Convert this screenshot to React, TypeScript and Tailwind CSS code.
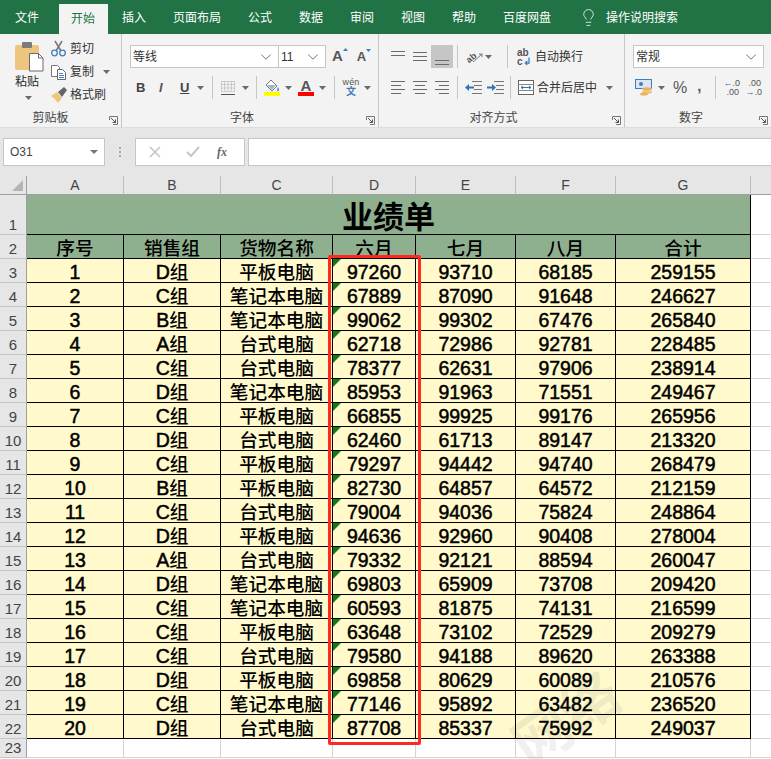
import React from "react";
import { ChevronDown, Lightbulb } from "lucide-react";

const FONT = { fontFamily: '"Liberation Sans", "Noto Sans CJK SC", sans-serif' };

const tabs = [
  { label: "文件", cls: "w-[59px] pl-[15px]" },
  { label: "开始", cls: "w-[49px] pl-[12px] bg-[#f3f3f3] text-[#217346] h-[30px] mt-[4px] pt-[6px]" },
  { label: "插入", cls: "w-[51px] pl-[14px]" },
  { label: "页面布局", cls: "w-[75px] pl-[14px]" },
  { label: "公式", cls: "w-[51px] pl-[14px]" },
  { label: "数据", cls: "w-[51px] pl-[14px]" },
  { label: "审阅", cls: "w-[51px] pl-[14px]" },
  { label: "视图", cls: "w-[51px] pl-[14px]" },
  { label: "帮助", cls: "w-[51px] pl-[14px]" },
  { label: "百度网盘", cls: "w-[77px] pl-[14px]" },
];

const rows: [string, string, number, number, number, number][] = [
  ["D组", "平板电脑", 97260, 93710, 68185, 259155],
  ["C组", "笔记本电脑", 67889, 87090, 91648, 246627],
  ["B组", "笔记本电脑", 99062, 99302, 67476, 265840],
  ["A组", "台式电脑", 62718, 72986, 92781, 228485],
  ["C组", "台式电脑", 78377, 62631, 97906, 238914],
  ["D组", "笔记本电脑", 85953, 91963, 71551, 249467],
  ["C组", "平板电脑", 66855, 99925, 99176, 265956],
  ["D组", "台式电脑", 62460, 61713, 89147, 213320],
  ["C组", "平板电脑", 79297, 94442, 94740, 268479],
  ["B组", "平板电脑", 82730, 64857, 64572, 212159],
  ["C组", "台式电脑", 79004, 94036, 75824, 248864],
  ["D组", "平板电脑", 94636, 92960, 90408, 278004],
  ["A组", "台式电脑", 79332, 92121, 88594, 260047],
  ["D组", "笔记本电脑", 69803, 65909, 73708, 209420],
  ["C组", "笔记本电脑", 60593, 81875, 74131, 216599],
  ["C组", "平板电脑", 63648, 73102, 72529, 209279],
  ["C组", "台式电脑", 79580, 94188, 89620, 263388],
  ["D组", "平板电脑", 69858, 80629, 60089, 210576],
  ["C组", "笔记本电脑", 77146, 95892, 63482, 236520],
  ["D组", "台式电脑", 87708, 85337, 75992, 249037],
];

const colNames = ["A", "B", "C", "D", "E", "F", "G"];

function Caret({ className = "" }: { className?: string }) {
  return (
    <svg width="7" height="4" viewBox="0 0 7 4" className={className}>
      <path d="M0 0h7L3.5 4z" fill="#6a6a6a" />
    </svg>
  );
}

function Sep({ className = "" }: { className?: string }) {
  return <div className={`w-px h-[23px] bg-[#c6c6c6] ${className}`} />;
}

function Lines({ widths, className = "" }: { widths: number[]; className?: string }) {
  return (
    <div className={`flex flex-col gap-[3px] w-[14px] ${className}`}>
      {widths.map((w, i) => (
        <div key={i} className="h-px bg-[#6b6b6b]" style={{ width: w }} />
      ))}
    </div>
  );
}

function Launcher() {
  return (
    <svg width="9" height="9" viewBox="0 0 9 9" className="absolute right-[3px] bottom-[2px]">
      <path d="M.5 4V.5H8.5V8.5H4" fill="none" stroke="#777" />
      <path d="M2 2l4.5 4.5M6.5 3.5v3h-3" fill="none" stroke="#555" />
    </svg>
  );
}

function Combo({ text, w, textCls = "" }: { text: string; w: string; textCls?: string }) {
  return (
    <div className={`h-[23px] bg-white border border-[#c6c6c6] flex items-center justify-between pl-[2px] pr-[3px] ${w}`}>
      <span className={`text-[12px] text-[#333] ${textCls}`}>{text}</span>
      <ChevronDown size={18} strokeWidth={1} color="#444" />
    </div>
  );
}

function Ribbon() {
  return (
    <div className="h-[94px] bg-[#f3f3f3] flex border-b border-[#dcdcdc] text-[#333] text-[12px]">
      {/* 剪贴板 */}
      <div className="relative w-[122px] border-r border-[#c6c6c6] flex flex-col">
        <div className="flex h-[76px]">
          <div className="w-[51px] pl-[15px] pt-[8px] flex flex-col">
            <svg width="29" height="30" viewBox="0 0 29 30">
              <rect x="0" y="3" width="24" height="25" rx="2" fill="#eec57e" />
              <rect x="7" y="0" width="10" height="6" rx="1" fill="#7b7b7b" />
              <path d="M14.5 11.5h9l4.500 4.500v13h-13.500z" fill="#fff" stroke="#6a6a6a" />
              <path d="M23.500 11.500v4.500h4.500" fill="none" stroke="#6a6a6a" />
            </svg>
            <span className="mt-[1px] leading-[18px] text-[#262626]">粘贴</span>
            <Caret className="ml-[10px] mt-[5px]" />
          </div>
          <div className="flex flex-col pt-[6px] gap-[5px]">
            <div className="flex items-center h-[18px]">
              <svg width="16" height="17" viewBox="0 0 16 17" className="mr-[3px] -mt-[2px]">
                <path d="M4 1l6 10M11 1L5 11" stroke="#777" strokeWidth="1.500" fill="none" />
                <circle cx="3.500" cy="13" r="2.800" fill="none" stroke="#3f7fbd" strokeWidth="1.300" />
                <circle cx="11.500" cy="13" r="2.800" fill="none" stroke="#3f7fbd" strokeWidth="1.300" />
              </svg>
              剪切
            </div>
            <div className="flex items-center h-[18px]">
              <svg width="16" height="15" viewBox="0 0 16 15" className="mr-[3px]">
                <path d="M.5.500h6l2 2v9h-8z" fill="#fff" stroke="#777" />
                <path d="M6.500 4.500h5l3 3v7h-8z" fill="#fff" stroke="#666" />
                <path d="M8 8.500h4M8 10.500h5M8 12.500h5" stroke="#3f7fbd" />
              </svg>
              复制
              <Caret className="ml-[9px]" />
            </div>
            <div className="flex items-center h-[18px]">
              <svg width="16" height="16" viewBox="0 0 16 16" className="mr-[3px]">
                <path d="M0 9l6-4 5 6-4 5C5 13 3 11 0 9z" fill="#eec57e" />
                <path d="M7 5l6-5 3 3-5 7z" fill="#666" />
              </svg>
              格式刷
            </div>
          </div>
        </div>
        <div className="text-center pr-[20px] leading-[16px] text-[#444]">剪贴板</div>
        <Launcher />
      </div>

      {/* 字体 */}
      <div className="relative w-[257px] border-r border-[#c6c6c6] flex flex-col">
        <div className="flex items-center h-[23px] mt-[11px] ml-[8px]">
          <Combo text="等线" w="w-[149px]" />
          <Combo text="11" w="w-[48px] -ml-px" textCls="text-[#2b6cb0]" />
          <span className="ml-[6px] text-[15px] font-bold text-[#555] relative">
            A<svg width="5" height="3" viewBox="0 0 5 3" className="absolute -right-[5px] top-[3px]"><path d="M0 3h5L2.500 0z" fill="#3f7fbd" /></svg>
          </span>
          <span className="ml-[14px] text-[13px] font-bold text-[#555] relative">
            A<svg width="5" height="3" viewBox="0 0 5 3" className="absolute -right-[5px] top-[2px]"><path d="M0 0h5L2.500 3z" fill="#3f7fbd" /></svg>
          </span>
        </div>
        <div className="flex items-center h-[23px] mt-[8px] ml-[14px]">
          <span className="w-[9px] ml-[0px] font-bold text-[13px] text-[#444] leading-none">B</span>
          <span className="ml-[14px] w-[6px] italic font-bold text-[13px] text-[#555] leading-none">I</span>
          <span className="ml-[15px] w-[9px] font-bold text-[13px] text-[#444] leading-none underline">U</span>
          <Caret className="ml-[8px]" />
          <Sep className="ml-[8px]" />
          <svg width="14" height="14" viewBox="0 0 14 14" className="ml-[8px]">
            <path d="M.5.500h13M.5 3.500h13M.5 7h13M.5 10.500h13M.5.500v10M3.500.5v10M7 .5v10M10.500.5v10M13.500.5v10" stroke="#aaa" strokeDasharray="1 1" fill="none" />
            <path d="M0 13.500h14" stroke="#555" />
          </svg>
          <Caret className="ml-[7px]" />
          <Sep className="ml-[7px]" />
          <div className="ml-[7px] w-[16px] flex flex-col items-center">
            <svg width="16" height="13" viewBox="0 0 16 13">
              <path d="M7 1l6 6-5 5-6-6z" fill="#fff" stroke="#777" />
              <path d="M3 6h9l-4 5z" fill="#9db6d2" />
              <path d="M14 8c1 2 1.500 3 .5 4s-2-1-.5-4z" fill="#3f7fbd" />
            </svg>
            <div className="w-[16px] h-[4px] bg-[#ffff00]" />
          </div>
          <Caret className="ml-[5px]" />
          <div className="ml-[6px] w-[16px] flex flex-col items-center">
            <span className="text-[15px] font-bold text-[#555] leading-[13px]">A</span>
            <div className="w-[16px] h-[4px] bg-[#ff0000]" />
          </div>
          <Caret className="ml-[5px]" />
          <Sep className="ml-[8px]" />
          <div className="ml-[8px] w-[16px] flex flex-col items-center leading-none">
            <span className="text-[9px] text-[#555] tracking-[0.2px]">wén</span>
            <span className="text-[10px] text-[#3f7fbd] font-bold">文</span>
          </div>
          <Caret className="ml-[5px]" />
        </div>
        <div className="mt-[11px] text-center pr-[16px] leading-[16px] text-[#444]">字体</div>
        <Launcher />
      </div>

      {/* 对齐方式 */}
      <div className="relative w-[246px] border-r border-[#c6c6c6] flex flex-col">
        <div className="flex items-center h-[23px] mt-[11px] ml-[12px]">
          <Lines widths={[14, 14]} className="-mt-[7px]" />
          <Lines widths={[14, 14, 14]} className="ml-[8px]" />
          <div className="ml-[4px] w-[22px] h-[23px] bg-[#c6c6c6] flex items-end justify-center pb-[3px]">
            <Lines widths={[14, 14]} />
          </div>
          <Sep className="ml-[4px]" />
          <svg width="18" height="16" viewBox="0 0 18 16" className="ml-[7px]">
            <text x="1" y="12" fontSize="9" fontWeight="bold" fill="#555" transform="rotate(-40 6 9)">ab</text>
            <path d="M8 13l9-8M14 5h3v3" stroke="#777" fill="none" />
          </svg>
          <Caret className="ml-[2px]" />
          <Sep className="ml-[15px]" />
          <div className="ml-[9px] w-[15px] leading-[9px] text-[10px] font-bold text-[#555] flex flex-col">
            <span>ab</span>
            <span>c<span className="text-[#3f7fbd]">↲</span></span>
          </div>
          <span className="ml-[3px] text-[#333]">自动换行</span>
        </div>
        <div className="flex items-center h-[23px] mt-[8px] ml-[12px]">
          <Lines widths={[14, 10, 14, 10]} />
          <Lines widths={[14, 10, 14, 10]} className="ml-[8px] items-center" />
          <Lines widths={[14, 10, 14, 10]} className="ml-[8px] items-end" />
          <Sep className="ml-[8px]" />
          <svg width="17" height="13" viewBox="0 0 17 13" className="ml-[7px]">
            <path d="M7 .5h10M9 4.500h8M9 8.500h8M7 12.500h10" stroke="#777" fill="none" />
            <path d="M0 6.500l4-3.500v2.500h5v2H4v2.500z" fill="#2f75b5" />
          </svg>
          <svg width="17" height="13" viewBox="0 0 17 13" className="ml-[5px]">
            <path d="M7 .5h10M9 4.500h8M9 8.500h8M7 12.500h10" stroke="#777" fill="none" />
            <path d="M9 6.500l-4-3.500v2.500H0v2h5v2.500z" fill="#2f75b5" />
          </svg>
          <Sep className="ml-[6px]" />
          <svg width="16" height="15" viewBox="0 0 16 15" className="ml-[7px]">
            <rect x=".5" y=".5" width="15" height="14" fill="#fff" stroke="#666" />
            <path d="M0 4.500h16M0 10.500h16" stroke="#888" />
            <path d="M3 7.500h10M3 7.500l2-1.500M3 7.500l2 1.500M13 7.500l-2-1.500M13 7.500l-2 1.500" stroke="#2f75b5" fill="none" />
          </svg>
          <span className="ml-[3px] text-[#333]">合并后居中</span>
          <Caret className="ml-[9px]" />
        </div>
        <div className="mt-[11px] text-center pr-[16px] leading-[16px] text-[#444]">对齐方式</div>
        <Launcher />
      </div>

      {/* 数字 */}
      <div className="relative flex-1 flex flex-col">
        <div className="h-[23px] mt-[11px] ml-[8px] mr-[7px]">
          <Combo text="常规" w="w-full" />
        </div>
        <div className="flex items-center h-[23px] mt-[8px] ml-[10px]">
          <svg width="18" height="17" viewBox="0 0 18 17">
            <rect x=".5" y=".5" width="16" height="9" fill="#dbe6f2" stroke="#3f7fbd" />
            <circle cx="6" cy="5" r="2" fill="#3f7fbd" />
            <ellipse cx="12" cy="10" rx="5" ry="1.800" fill="#e6b35c" />
            <ellipse cx="12" cy="13" rx="5" ry="1.800" fill="#eec57e" />
            <ellipse cx="9" cy="15" rx="4" ry="1.600" fill="#e6b35c" />
          </svg>
          <Caret className="ml-[5px]" />
          <span className="ml-[8px] text-[16px] text-[#555] leading-none">%</span>
          <span className="ml-[10px] text-[15px] font-bold text-[#555] leading-none -mt-[4px]">,</span>
          <Sep className="ml-[14px]" />
          <div className="ml-[7px] w-[16px] text-[9px] text-[#555] leading-[9px] flex flex-col">
            <span><span className="text-[#2f75b5]">←</span>.0</span>
            <span className="pl-[3px]">.00</span>
          </div>
          <div className="ml-[6px] w-[16px] text-[9px] text-[#555] leading-[9px] flex flex-col">
            <span className="pl-[3px]">.00</span>
            <span><span className="text-[#2f75b5]">→</span>.0</span>
          </div>
        </div>
        <div className="mt-[11px] text-center pr-[14px] leading-[16px] text-[#444]">数字</div>
        <Launcher />
      </div>
    </div>
  );
}

function FormulaBar() {
  return (
    <div className="h-[48px] bg-[#e6e6e6] flex pt-[10px] pl-[3px]">
      <div className="w-[102px] h-[28px] bg-white border border-[#c6c6c6] flex items-center justify-between pl-[6px] pr-[6px] text-[12px] text-[#444]">
        O31
        <svg width="8" height="4" viewBox="0 0 8 4"><path d="M0 0h8L4 4z" fill="#777" /></svg>
      </div>
      <div className="w-[30px] h-[28px] flex flex-col items-center justify-center gap-[2px]">
        <div className="w-[2px] h-[2px] bg-[#aaa]" />
        <div className="w-[2px] h-[2px] bg-[#aaa]" />
        <div className="w-[2px] h-[2px] bg-[#aaa]" />
      </div>
      <div className="w-[110px] h-[28px] bg-white border border-[#c6c6c6] flex items-center">
        <svg width="12" height="12" viewBox="0 0 12 12" className="ml-[13px]"><path d="M1 1l10 10M11 1L1 11" stroke="#c6c6c6" strokeWidth="1.600" /></svg>
        <svg width="14" height="12" viewBox="0 0 14 12" className="ml-[25px]"><path d="M1 6l4 4 8-9" stroke="#c6c6c6" strokeWidth="2" fill="none" /></svg>
        <span className="ml-[17px] italic font-bold text-[12px] text-[#666]" style={{ fontFamily: "'Liberation Serif', serif" }}>fx</span>
      </div>
      <div className="ml-[3px] flex-1 h-[28px] bg-white border-y border-l border-[#c6c6c6]" />
    </div>
  );
}

const gridCols = "grid grid-cols-[27px_97px_97px_112px_83px_100px_100px_135px_20px]";
const rowH = "grid-rows-[24px] leading-none";
const cell = "border-r border-b border-black flex items-center justify-center pt-[5px] font-medium";
const yellow = `${cell} bg-[#fff9cc]`;
const semiBold = "text-[19.500px] font-normal [-webkit-text-stroke:0.5px_black]";
const numCell = `${yellow} ${semiBold} text-black`;

function RowHead({ n }: { n: number }) {
  return (
    <div className="bg-[#e6e6e6] border-r border-r-[#9f9f9f] border-b border-b-[#c6c6c6] flex items-end justify-center text-[#444] text-[15px] leading-[19px]">
      {n}
    </div>
  );
}

function Sheet() {
  return (
    <div className="relative bg-white" style={FONT}>
      {/* column headers */}
      <div className={`${gridCols} grid-rows-[19px] bg-[#e6e6e6] text-[#444] text-[14px] leading-none`}>
        <div className="border-r border-b border-[#9f9f9f] flex items-end justify-end pr-[3px] pb-[3px]">
          <svg width="11" height="11" viewBox="0 0 11 11"><path d="M11 0v11H0z" fill="#b4b4b4" /></svg>
        </div>
        {colNames.map((c) => (
          <div key={c} className="border-b border-b-[#9f9f9f] border-r border-r-[#bdbdbd] flex items-center justify-center">{c}</div>
        ))}
        <div className="border-b border-[#9f9f9f]" />
      </div>

      {/* row 1, title */}
      <div className={`${gridCols} grid-rows-[40px] leading-none`}>
        <RowHead n={1} />
        <div className="col-span-7 bg-[#8fb08f] border-r border-b border-black flex items-center justify-center pt-[5px] text-[31px] font-bold text-black">业绩单</div>
        <div className="border-b border-[#d4d4d4]" />
      </div>

      {/* row 2, headings */}
      <div className={`${gridCols} ${rowH} text-[18.670px] text-black`}>
        <RowHead n={2} />
        {["序号", "销售组", "货物名称", "六月", "七月", "八月", "合计"].map((h) => (
          <div key={h} className={`${cell} bg-[#8fb08f]`}>{h}</div>
        ))}
        <div className="border-b border-[#d4d4d4]" />
      </div>

      {rows.map((r, i) => (
        <div key={i} className={`${gridCols} ${rowH} text-[18.670px] text-black`}>
          <RowHead n={i + 3} />
          <div className={numCell}>{i + 1}</div>
          <div className={yellow}>
            <span className={semiBold}>{r[0][0]}</span>
            <span>{r[0][1]}</span>
          </div>
          <div className={yellow}>{r[1]}</div>
          <div className={`${numCell} relative`}>
            <svg width="8" height="8" viewBox="0 0 8 8" className="absolute left-0 top-0"><path d="M0 0h8L0 8z" fill="#107c10" /></svg>
            {r[2]}
          </div>
          <div className={numCell}>{r[3]}</div>
          <div className={numCell}>{r[4]}</div>
          <div className={numCell}>{r[5]}</div>
          <div className="border-b border-[#d4d4d4]" />
        </div>
      ))}

      {/* row 23 */}
      <div className={`${gridCols} grid-rows-[19px] leading-none`}>
        <RowHead n={23} />
        {colNames.map((c) => (
          <div key={c} className="border-r border-b border-[#d4d4d4]" />
        ))}
        <div className="border-b border-[#d4d4d4]" />
      </div>

      {/* red selection box */}
      <div className="absolute left-[328px] top-[79px] w-[93px] h-[490px] border-[3px] border-[#ff2a1f] rounded-[2px] pointer-events-none" />

      {/* watermark */}
      <div className="absolute left-[509px] top-[515px] text-[58px] leading-none font-bold text-black/[0.06] -rotate-[35deg] pointer-events-none whitespace-nowrap">网络</div>
    </div>
  );
}

export default function App() {
  return (
    <div className="w-[771px] h-[759px] overflow-hidden bg-white" style={FONT}>
      <div className="h-[34px] bg-[#217346] flex text-white text-[12px] leading-[36px]">
        {tabs.map((t) => (
          <div key={t.label} className={`${t.cls} ${t.label === "开始" ? "leading-[18px]" : ""}`}>{t.label}</div>
        ))}
        <Lightbulb size={19} strokeWidth={1} className="ml-[13px] mt-[8px]" />
        <span className="ml-[8px]">操作说明搜索</span>
      </div>
      <Ribbon />
      <FormulaBar />
      <Sheet />
    </div>
  );
}
